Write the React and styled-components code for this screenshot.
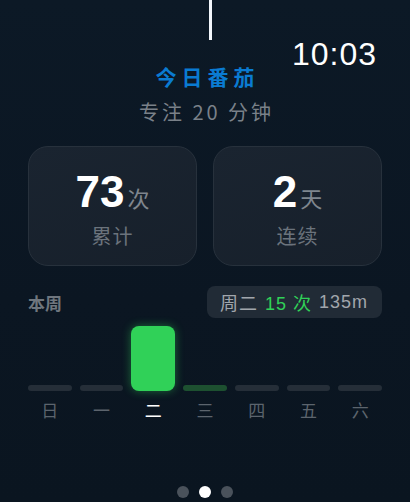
import React from "react";
import styled, { createGlobalStyle } from "styled-components";

const Global = createGlobalStyle`
  html, body { margin: 0; padding: 0; background: #0b1723; }
  * { box-sizing: border-box; }
`;

const Page = styled.div`
  position: relative;
  width: 410px;
  height: 502px;
  overflow: hidden;
  background: linear-gradient(180deg, #0c1926 0%, #0b1622 60%, #0a1520 100%);
  font-family: "Liberation Sans", "Noto Sans CJK SC", sans-serif;
  color: #fff;
  display: flex;
  flex-direction: column;
`;

const Crown = styled.div`
  position: absolute;
  left: 209px;
  top: 0;
  width: 3px;
  height: 40px;
  background: #f2f6fb;
`;

const StatusBar = styled.div`
  display: flex;
  justify-content: flex-end;
  padding: 38px 33px 0 0;
`;

const Time = styled.div`
  font-size: 32px;
  line-height: 32px;
  font-weight: 400;
  color: #fff;
  letter-spacing: 1px;
`;

const Title = styled.div`
  text-align: center;
  font-family: "Noto Sans CJK SC", sans-serif;
  font-size: 21px;
  line-height: 24px;
  font-weight: 700;
  color: #0a7bd2;
  letter-spacing: 5px;
  padding-left: 5px;
  margin-top: -6px;
`;

const Subtitle = styled.div`
  text-align: center;
  font-family: "Noto Sans CJK SC", sans-serif;
  font-size: 20px;
  line-height: 24px;
  color: #7a8189;
  letter-spacing: 3px;
  padding-left: 3px;
  margin-top: 12px;
`;

const Cards = styled.div`
  display: grid;
  grid-template-columns: 1fr 1fr;
  gap: 16px;
  padding: 0 28px;
  margin-top: 22px;
`;

const Card = styled.div`
  height: 120px;
  border-radius: 20px;
  background: linear-gradient(160deg, #1a2430 0%, #17202b 100%);
  border: 1px solid #27313c;
  display: flex;
  flex-direction: column;
  align-items: center;
  padding-top: 22px;
`;

const Value = styled.div`
  display: flex;
  align-items: baseline;
  line-height: 46px;
`;

const Big = styled.span`
  font-size: 44px;
  font-weight: 700;
  color: #fff;
`;

const Unit = styled.span`
  font-family: "Noto Sans CJK SC", sans-serif;
  font-size: 22px;
  color: #7f868e;
  margin-left: 3px;
`;

const Label = styled.div`
  font-family: "Noto Sans CJK SC", sans-serif;
  font-size: 20px;
  line-height: 24px;
  color: #6b737c;
  letter-spacing: 1px;
  margin-top: 4px;
`;

const WeekHead = styled.div`
  display: flex;
  justify-content: space-between;
  align-items: center;
  padding: 0 28px;
  margin-top: 20px;
`;

const WeekTitle = styled.div`
  font-family: "Noto Sans CJK SC", sans-serif;
  font-size: 17px;
  font-weight: 700;
  color: #6f767e;
`;

const Pill = styled.div`
  height: 32px;
  display: flex;
  align-items: center;
  gap: 7px;
  padding: 0 14px 0 13px;
  border-radius: 8px;
  background: #212b36;
  font-family: "Liberation Sans", "Noto Sans CJK SC", sans-serif;
  font-size: 18px;
  letter-spacing: 1px;
`;

const PillText = styled.span`
  color: ${(p) => (p.$accent ? "#30d158" : "#a1a6ac")};
  font-weight: 400;
`;

const Chart = styled.div`
  display: grid;
  grid-template-columns: repeat(7, 1fr);
  column-gap: 8px;
  padding: 0 28px;
  margin-top: 8px;
`;

const Col = styled.div`
  display: flex;
  flex-direction: column;
  align-items: stretch;
`;

const BarArea = styled.div`
  height: 65px;
  display: flex;
  flex-direction: column;
  justify-content: flex-end;
`;

const Bar = styled.div`
  border-radius: ${(p) => (p.$tall ? "8px" : "3px")};
  background: ${(p) => p.$color};
  box-shadow: ${(p) => (p.$tall ? "0 0 10px rgba(48, 209, 88, 0.45)" : "none")};
`;

const Day = styled.div`
  text-align: center;
  font-family: "Noto Sans CJK SC", sans-serif;
  font-size: 17px;
  line-height: 20px;
  margin-top: 9px;
  color: ${(p) => (p.$active ? "#ffffff" : "#5c646d")};
`;

const Dots = styled.div`
  margin-top: auto;
  margin-bottom: 4px;
  display: flex;
  justify-content: center;
  gap: 10px;
`;

const Dot = styled.div`
  width: 12px;
  height: 12px;
  border-radius: 50%;
  background: ${(p) => (p.$active ? "#ffffff" : "#4a525b")};
`;

const days = [
  { d: "日", h: 6, c: "#252e38" },
  { d: "一", h: 6, c: "#252e38" },
  { d: "二", h: 65, c: "#30d158", tall: true, active: true },
  { d: "三", h: 6, c: "#1d5030" },
  { d: "四", h: 6, c: "#252e38" },
  { d: "五", h: 6, c: "#252e38" },
  { d: "六", h: 6, c: "#252e38" },
];

export default function App() {
  return (
    <>
      <Global />
      <Page>
        <Crown />
        <StatusBar>
          <Time>10:03</Time>
        </StatusBar>
        <Title>今日番茄</Title>
        <Subtitle>专注 20 分钟</Subtitle>
        <Cards>
          <Card>
            <Value>
              <Big>73</Big>
              <Unit>次</Unit>
            </Value>
            <Label>累计</Label>
          </Card>
          <Card>
            <Value>
              <Big>2</Big>
              <Unit>天</Unit>
            </Value>
            <Label>连续</Label>
          </Card>
        </Cards>
        <WeekHead>
          <WeekTitle>本周</WeekTitle>
          <Pill>
            <PillText>周二</PillText>
            <PillText $accent>15 次</PillText>
            <PillText>135m</PillText>
          </Pill>
        </WeekHead>
        <Chart>
          {days.map((x) => (
            <Col key={x.d}>
              <BarArea>
                <Bar $tall={x.tall} $color={x.c} style={{ height: x.h }} />
              </BarArea>
              <Day $active={x.active}>{x.d}</Day>
            </Col>
          ))}
        </Chart>
        <Dots>
          <Dot />
          <Dot $active />
          <Dot />
        </Dots>
      </Page>
    </>
  );
}
